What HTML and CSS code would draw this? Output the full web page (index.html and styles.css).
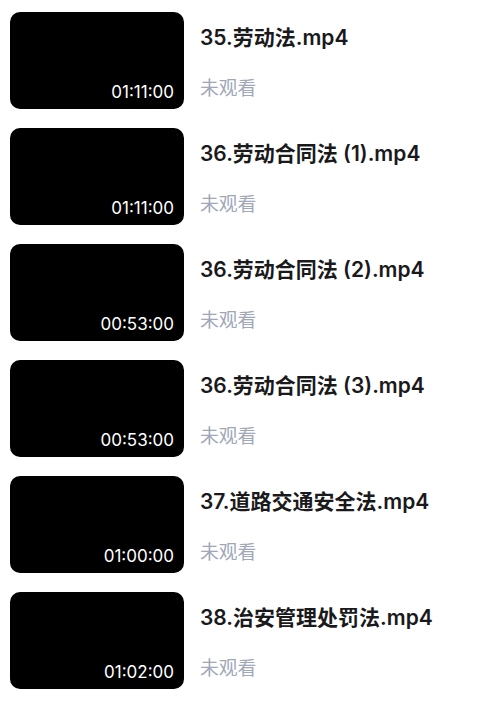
FILE: index.html
```html
<!DOCTYPE html>
<html lang="zh-CN">
<head>
<meta charset="utf-8">
<title>视频列表</title>
<link rel="stylesheet" href="styles.css">
</head>
<body>
<ul class="list">
  <li class="item">
    <div class="thumb"><span class="dur">01:11:00</span></div>
    <div class="info"><div class="title">35.劳动法.mp4</div><div class="status">未观看</div></div>
  </li>
  <li class="item">
    <div class="thumb"><span class="dur">01:11:00</span></div>
    <div class="info"><div class="title">36.劳动合同法 (1).mp4</div><div class="status">未观看</div></div>
  </li>
  <li class="item">
    <div class="thumb"><span class="dur">00:53:00</span></div>
    <div class="info"><div class="title">36.劳动合同法 (2).mp4</div><div class="status">未观看</div></div>
  </li>
  <li class="item">
    <div class="thumb"><span class="dur">00:53:00</span></div>
    <div class="info"><div class="title">36.劳动合同法 (3).mp4</div><div class="status">未观看</div></div>
  </li>
  <li class="item">
    <div class="thumb"><span class="dur">01:00:00</span></div>
    <div class="info"><div class="title">37.道路交通安全法.mp4</div><div class="status">未观看</div></div>
  </li>
  <li class="item">
    <div class="thumb"><span class="dur">01:02:00</span></div>
    <div class="info"><div class="title">38.治安管理处罚法.mp4</div><div class="status">未观看</div></div>
  </li>
</ul>
</body>
</html>
```
FILE: styles.css
```css
html, body {
  margin: 0;
  padding: 0;
  background: #ffffff;
}
body {
  font-family: Inter, "Noto Sans CJK SC", sans-serif;
}
.list {
  list-style: none;
  margin: 0;
  padding: 12px 10px 0 10px;
  display: flex;
  flex-direction: column;
  gap: 19px;
}
.item {
  display: flex;
  gap: 16px;
}
.thumb {
  position: relative;
  width: 174px;
  height: 97px;
  flex: none;
  background: #000;
  border-radius: 10px;
}
.dur {
  position: absolute;
  right: 10px;
  bottom: 7px;
  color: #fff;
  font-size: 17px;
  line-height: 20px;
}
.info {
  display: flex;
  flex-direction: column;
  padding-top: 11px;
}
.title {
  font-size: 21px;
  line-height: 30px;
  font-weight: 600;
  color: #1a1a1c;
}
.status {
  margin-top: 23px;
  font-size: 18.8px;
  line-height: 26px;
  color: #a0a7b8;
}
```
